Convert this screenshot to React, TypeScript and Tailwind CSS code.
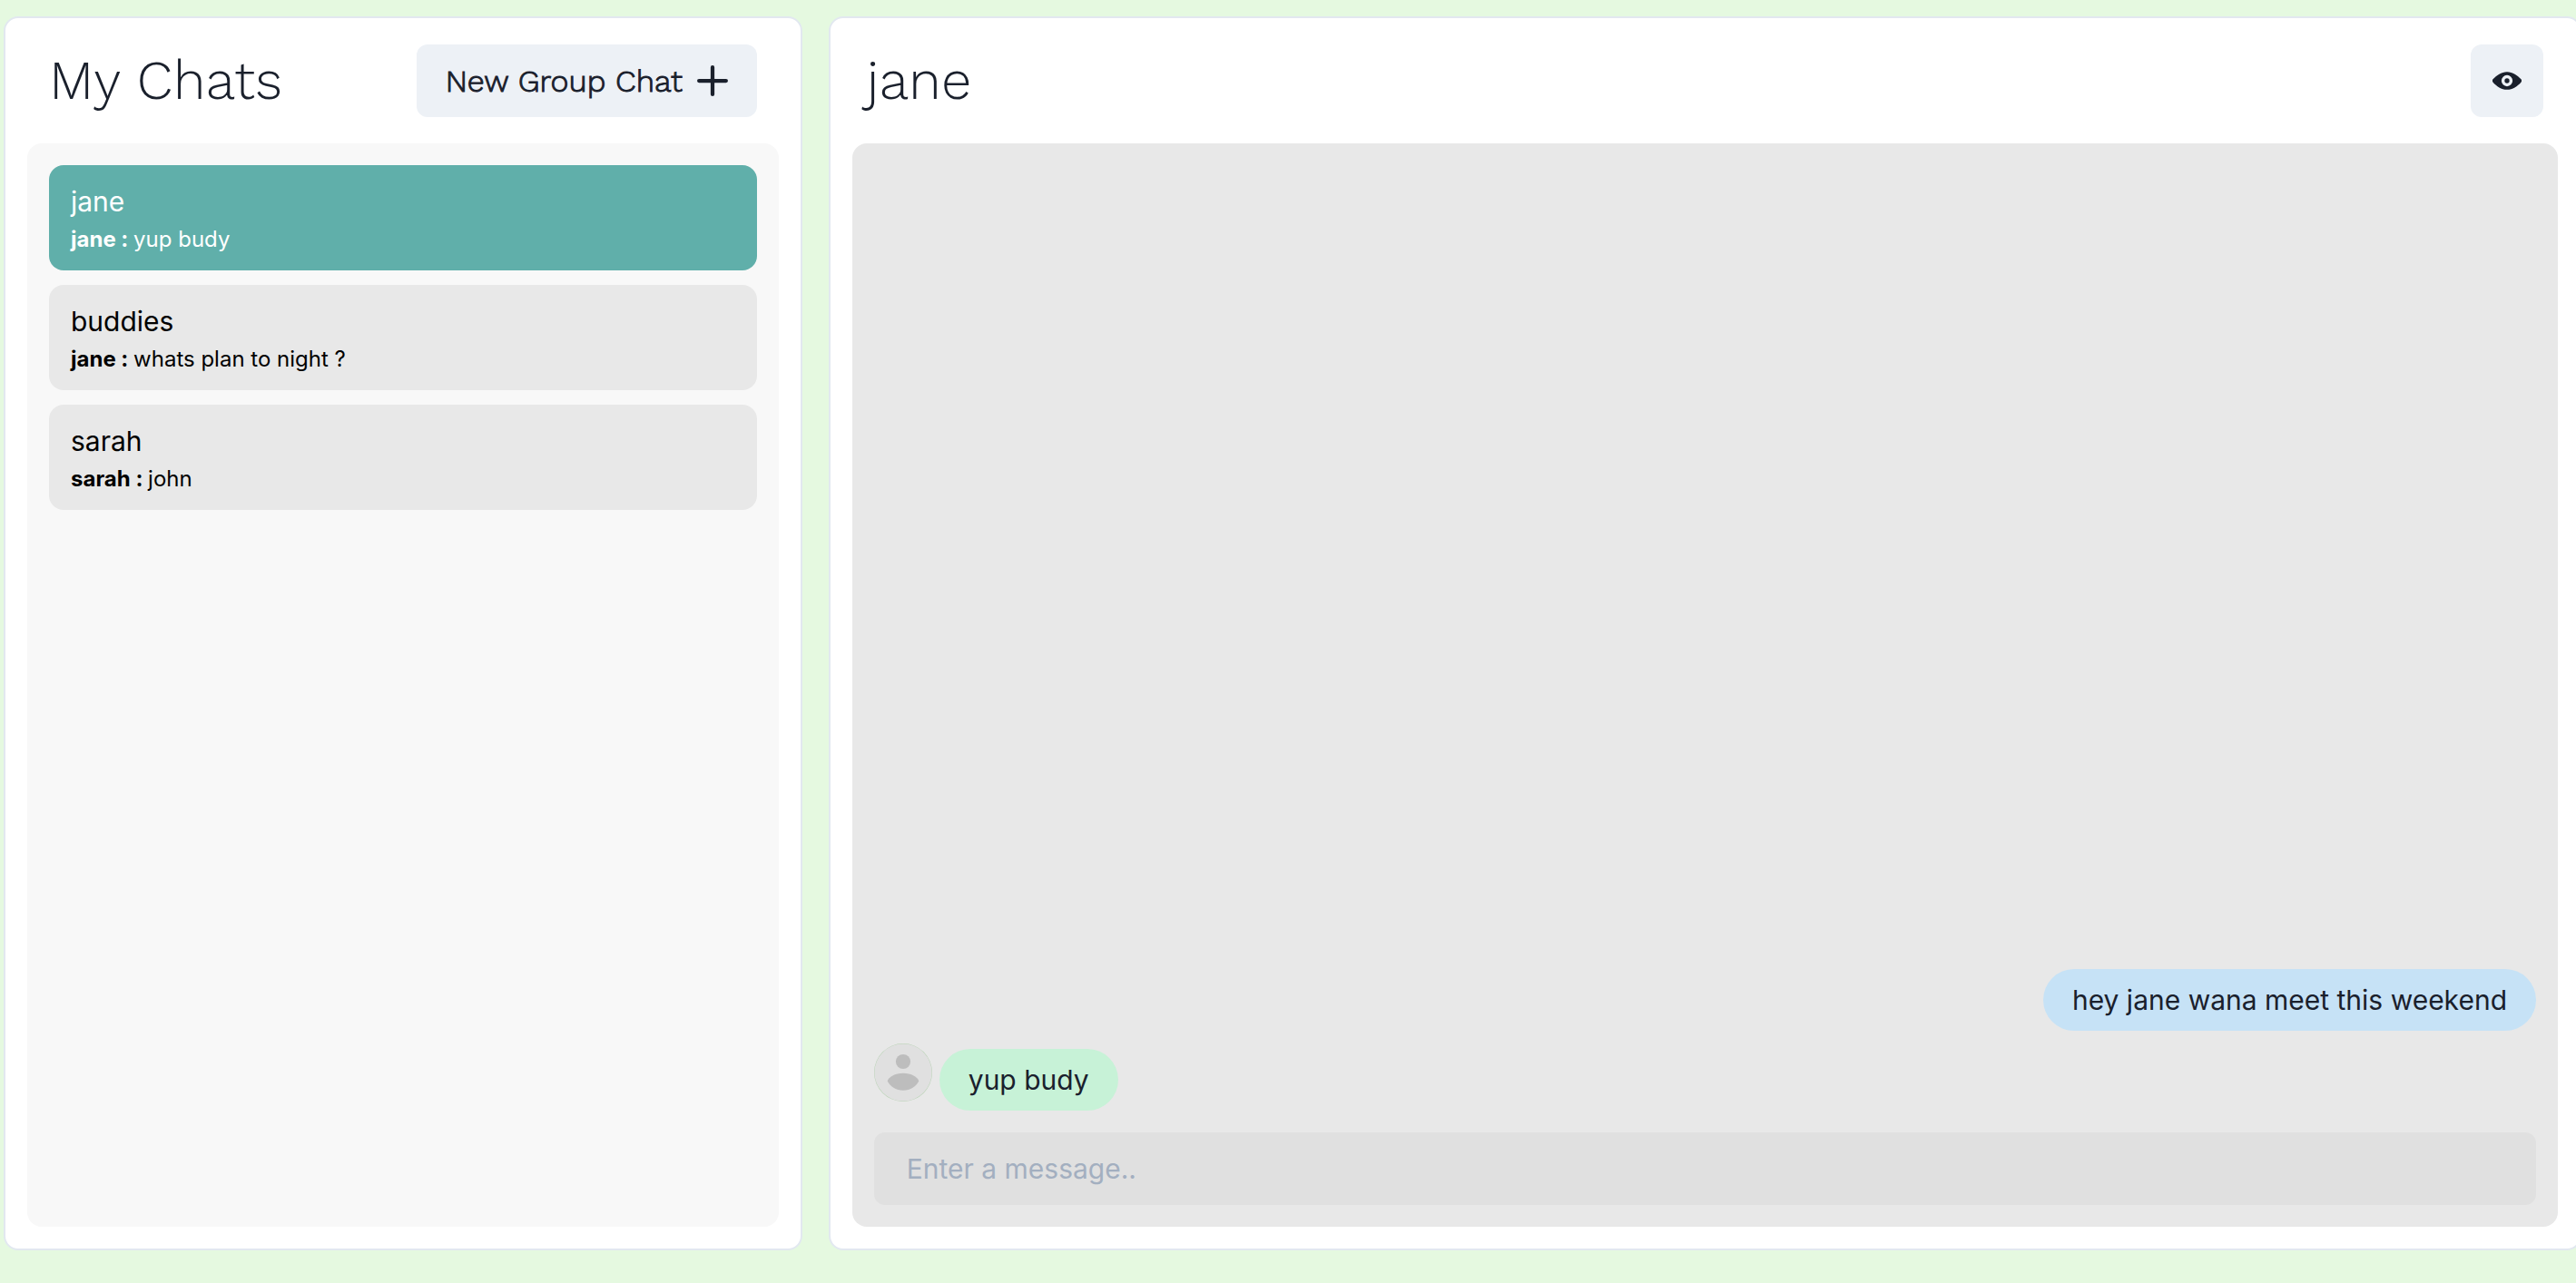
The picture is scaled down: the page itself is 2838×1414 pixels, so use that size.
type Chat = { name: string; sender: string; text: string; active?: boolean };

const chats: Chat[] = [
  { name: "jane", sender: "jane", text: "yup budy", active: true },
  { name: "buddies", sender: "jane", text: "whats plan to night ?" },
  { name: "sarah", sender: "sarah", text: "john" },
];

function AddIcon() {
  return (
    <svg viewBox="0 0 24 24" className="size-[34px] shrink-0" fill="currentColor" aria-hidden="true">
      <path d="M0,12a1.5,1.5,0,0,0,1.5,1.5h8.75a.25.25,0,0,1,.25.25V22.5a1.5,1.5,0,0,0,3,0V13.75a.25.25,0,0,1,.25-.25H22.5a1.5,1.5,0,0,0,0-3H13.75a.25.25,0,0,1-.25-.25V1.5a1.5,1.5,0,0,0-3,0v8.75a.25.25,0,0,1-.25.25H1.5A1.5,1.5,0,0,0,0,12Z" />
    </svg>
  );
}

function ViewIcon() {
  return (
    <svg viewBox="0 0 24 24" className="size-8" fill="currentColor" aria-hidden="true">
      <path d="M23.432,10.524C20.787,7.614,16.4,4.538,12,4.6,7.6,4.537,3.213,7.615.568,10.524a2.211,2.211,0,0,0,0,2.948C3.182,16.351,7.507,19.4,11.839,19.4h.308c4.347,0,8.671-3.049,11.288-5.929A2.21,2.21,0,0,0,23.432,10.524ZM7.4,12A4.6,4.6,0,1,1,12,16.6,4.6,4.6,0,0,1,7.4,12Z" />
      <circle cx="12" cy="12" r="2" />
    </svg>
  );
}

function Avatar() {
  return (
    <svg viewBox="0 0 64 64" className="mb-2.5 size-16 shrink-0" role="img" aria-label="jane">
      <circle cx="32" cy="32" r="32" fill="#b9d3b5" />
      <circle cx="32" cy="32" r="31.6" fill="#e0e0e0" />
      <circle cx="32" cy="20" r="8.1" fill="#bdbdbd" />
      <path d="M14.7 41.5C16 37 23 32.8 32 32.8S48 37 49.3 41.5C46.5 47 40 51.8 32 51.8S17.5 47 14.7 41.5Z" fill="#bdbdbd" />
    </svg>
  );
}

export default function App() {
  return (
    <main className="flex h-screen gap-[29px] overflow-hidden bg-[#e5f9e0] pt-[18px] pb-9 font-['Inter',sans-serif] text-[#1a202c]">
      <section className="ml-1 flex w-[31%] shrink-0 flex-col rounded-2xl border-2 border-[#e2e8f0] bg-white p-6">
        <header className="flex items-center justify-between px-6 pb-6 font-['Work_Sans','Inter',sans-serif]">
          <h1 className="text-[60px] leading-[90px] font-light">My Chats</h1>
          <button
            type="button"
            className="flex h-20 items-center gap-4 rounded-xl bg-[#edf1f6] px-8 text-[34px] font-light whitespace-nowrap [-webkit-text-stroke:1px_#1a202c]"
          >
            New Group Chat
            <AddIcon />
          </button>
        </header>
        <ul className="flex grow flex-col gap-4 rounded-2xl bg-[#f8f8f8] p-6">
          {chats.map((chat) => (
            <li key={chat.name}>
              <button
                type="button"
                className={
                  chat.active
                    ? "block w-full rounded-2xl bg-[#60afaa] px-6 py-4 text-left text-white"
                    : "block w-full rounded-2xl bg-[#e8e8e8] px-6 py-4 text-left text-black"
                }
              >
                <span className="block text-[30px] leading-[48px]">{chat.name}</span>
                <span className="block text-[24px] leading-[36px]">
                  <b className="font-bold">{chat.sender} : </b>
                  {chat.text}
                </span>
              </button>
            </li>
          ))}
        </ul>
      </section>

      <section className="-mr-1.5 flex min-w-0 flex-1 flex-col rounded-2xl border-2 border-[#e2e8f0] bg-white p-6">
        <header className="flex items-center justify-between px-4 pb-6 font-['Work_Sans','Inter',sans-serif]">
          <h2 className="text-[60px] leading-[90px] font-light">jane</h2>
          <button
            type="button"
            aria-label="View profile"
            className="flex size-20 items-center justify-center rounded-xl bg-[#edf1f6]"
          >
            <ViewIcon />
          </button>
        </header>
        <div className="flex grow flex-col justify-end gap-6 rounded-2xl bg-[#e8e8e8] p-6 text-[30px]">
          <div className="flex flex-col gap-3.5 leading-[48px]">
            <p className="self-end rounded-full bg-[#c6e2f6] px-8 py-2.5">hey jane wana meet this weekend</p>
            <div className="flex items-end gap-2">
              <Avatar />
              <p className="rounded-full bg-[#c7f2d7] px-8 py-2.5">yup budy</p>
            </div>
          </div>
          <input
            type="text"
            aria-label="Message"
            placeholder="Enter a message.."
            className="h-20 w-full rounded-xl bg-[#e0e0e0] px-9 outline-none placeholder:text-[#a3afc0]"
          />
        </div>
      </section>
    </main>
  );
}
